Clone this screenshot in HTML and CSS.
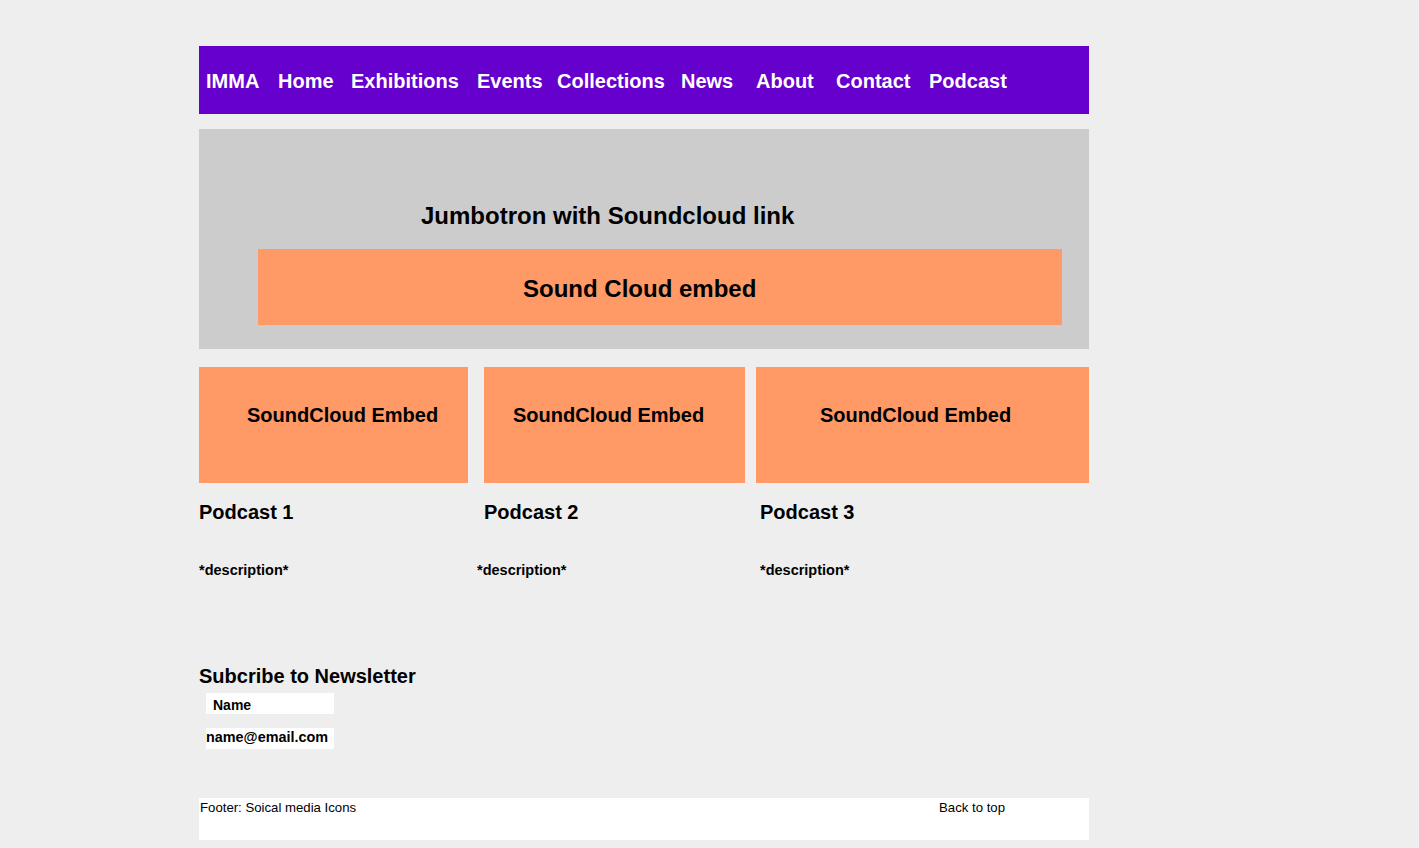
FILE: index.html
```html
<!DOCTYPE html>
<html lang="en">
<head>
<meta charset="utf-8">
<title>IMMA Podcast</title>
<link rel="stylesheet" href="styles.css">
</head>
<body>
<div class="page">
  <nav class="nav">
    <a class="nav-item">IMMA</a>
    <a class="nav-item">Home</a>
    <a class="nav-item">Exhibitions</a>
    <a class="nav-item">Events</a>
    <a class="nav-item">Collections</a>
    <a class="nav-item">News</a>
    <a class="nav-item">About</a>
    <a class="nav-item">Contact</a>
    <a class="nav-item">Podcast</a>
  </nav>

  <section class="jumbo">
    <h1 class="jumbo-title">Jumbotron with Soundcloud link</h1>
    <div class="jumbo-embed">Sound Cloud embed</div>
  </section>

  <section class="podcasts">
    <div class="col col1">
      <div class="embed">SoundCloud Embed</div>
      <h2 class="pod-title">Podcast 1</h2>
      <p class="pod-desc">*description*</p>
    </div>
    <div class="col col2">
      <div class="embed">SoundCloud Embed</div>
      <h2 class="pod-title">Podcast 2</h2>
      <p class="pod-desc">*description*</p>
    </div>
    <div class="col col3">
      <div class="embed">SoundCloud Embed</div>
      <h2 class="pod-title">Podcast 3</h2>
      <p class="pod-desc">*description*</p>
    </div>
  </section>

  <section class="newsletter">
    <h2 class="news-title">Subcribe to Newsletter</h2>
    <div class="field field-name">Name</div>
    <div class="field field-email">name@email.com</div>
  </section>

  <footer class="footer">
    <span class="footer-left">Footer: Soical media Icons</span>
    <span class="footer-right">Back to top</span>
  </footer>
</div>
</body>
</html>
```

FILE: styles.css
```css
html, body {
  margin: 0;
  padding: 0;
}

body {
  background: #eeeeee;
  font-family: "Liberation Sans", Arial, sans-serif;
  color: #000;
}

.page {
  width: 890px;
  margin-left: 199px;
  padding-top: 46px;
}

/* NAV */
.nav {
  height: 68px;
  box-sizing: border-box;
  background: #6600cc;
  display: flex;
  align-items: center;
  padding-left: 7px;
  padding-top: 2px;
}

.nav-item {
  color: #fff;
  font-weight: bold;
  font-size: 20px;
  line-height: 24px;
  white-space: nowrap;
  flex: none;
}

.nav-item:nth-child(1) { width: 72px; }
.nav-item:nth-child(2) { width: 73px; }
.nav-item:nth-child(3) { width: 126px; }
.nav-item:nth-child(4) { width: 80px; }
.nav-item:nth-child(5) { width: 124px; }
.nav-item:nth-child(6) { width: 75px; }
.nav-item:nth-child(7) { width: 80px; }
.nav-item:nth-child(8) { width: 93px; }

/* JUMBOTRON */
.jumbo {
  margin-top: 15px;
  height: 220px;
  box-sizing: border-box;
  background: #cccccc;
  padding-top: 73px;
}

.jumbo-title {
  margin: 0;
  padding-left: 222px;
  font-size: 24px;
  line-height: 28px;
  font-weight: bold;
}

.jumbo-embed {
  margin: 19px 0 0 59px;
  width: 804px;
  height: 76px;
  background: #ff9966;
  display: flex;
  align-items: center;
  padding-left: 265px;
  padding-top: 4px;
  box-sizing: border-box;
  font-size: 24px;
  line-height: 28px;
  font-weight: bold;
}

/* PODCASTS */
.podcasts {
  display: flex;
  margin-top: 18px;
}

.col1 { width: 269px; }
.col2 { width: 261px; margin-left: 16px; }
.col3 { width: 333px; margin-left: 11px; }

.embed {
  height: 116px;
  box-sizing: border-box;
  background: #ff9966;
  padding-top: 36px;
  font-size: 20px;
  line-height: 24px;
  font-weight: bold;
  white-space: nowrap;
}

.col1 .embed { padding-left: 48px; }
.col2 .embed { padding-left: 29px; }
.col3 .embed { padding-left: 64px; }

.pod-title {
  margin: 17px 0 0 0;
  font-size: 20px;
  line-height: 24px;
  font-weight: bold;
}

.col3 .pod-title { padding-left: 4px; }

.pod-desc {
  margin: 38px 0 0 0;
  font-size: 14.5px;
  line-height: 17px;
  font-weight: bold;
}

.col2 .pod-desc { margin-left: -7px; }
.col3 .pod-desc { margin-left: 4px; }

/* NEWSLETTER */
.newsletter {
  margin-top: 85px;
}

.news-title {
  margin: 0;
  font-size: 20px;
  line-height: 24px;
  font-weight: bold;
}

.field {
  width: 128px;
  height: 21px;
  box-sizing: border-box;
  background: #fff;
  margin-left: 7px;
  font-size: 14px;
  line-height: 21px;
  font-weight: bold;
  white-space: nowrap;
}

.field-name {
  margin-top: 5px;
  padding-left: 7px;
  padding-top: 4px;
  line-height: 17px;
}

.field-email {
  margin-top: 14px;
  line-height: 19px;
  font-size: 14.4px;
}

/* FOOTER */
.footer {
  margin-top: 49px;
  height: 42px;
  background: #fff;
  display: flex;
  align-items: flex-start;
  padding-top: 2px;
  box-sizing: border-box;
  font-size: 13.2px;
  line-height: 15px;
}

.footer-left {
  padding-left: 1px;
  width: 739px;
  flex: none;
}
```
